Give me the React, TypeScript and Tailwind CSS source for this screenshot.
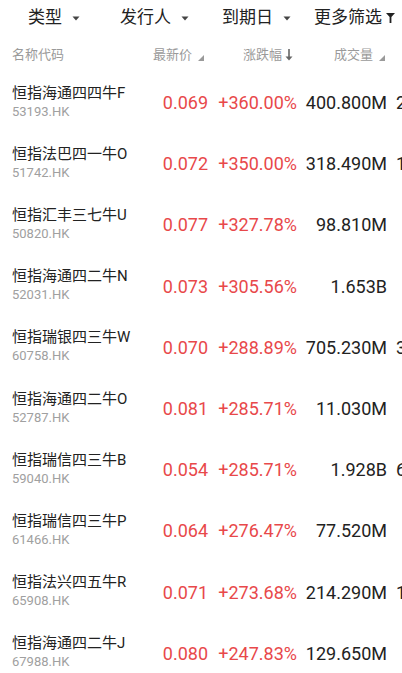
import React from 'react';

type Row = { name: string; code: string; price: string; change: string; volume: string; extra?: string };

const rows: Row[] = [
  { name: '恒指海通四四牛F', code: '53193.HK', price: '0.069', change: '+360.00%', volume: '400.800M', extra: '27.655M' },
  { name: '恒指法巴四一牛O', code: '51742.HK', price: '0.072', change: '+350.00%', volume: '318.490M', extra: '19.802M' },
  { name: '恒指汇丰三七牛U', code: '50820.HK', price: '0.077', change: '+327.78%', volume: '98.810M' },
  { name: '恒指海通四二牛N', code: '52031.HK', price: '0.073', change: '+305.56%', volume: '1.653B' },
  { name: '恒指瑞银四三牛W', code: '60758.HK', price: '0.070', change: '+288.89%', volume: '705.230M', extra: '39.127M' },
  { name: '恒指海通四二牛O', code: '52787.HK', price: '0.081', change: '+285.71%', volume: '11.030M' },
  { name: '恒指瑞信四三牛B', code: '59040.HK', price: '0.054', change: '+285.71%', volume: '1.928B', extra: '65.410M' },
  { name: '恒指瑞信四三牛P', code: '61466.HK', price: '0.064', change: '+276.47%', volume: '77.520M' },
  { name: '恒指法兴四五牛R', code: '65908.HK', price: '0.071', change: '+273.68%', volume: '214.290M', extra: '12.988M' },
  { name: '恒指海通四二牛J', code: '67988.HK', price: '0.080', change: '+247.83%', volume: '129.650M' },
];

const cjk = "font-['Roboto','Noto_Sans_CJK_SC',sans-serif]";
const num = "font-['Roboto',sans-serif]";

function Caret() {
  return (
    <svg width="8" height="5" viewBox="0 0 8 5" className="ml-[10px] shrink-0">
      <path d="M0.5 0.5 L7.5 0.5 L4 4.5 Z" fill="#444" />
    </svg>
  );
}

function Funnel() {
  return (
    <svg width="9" height="10" viewBox="0 0 9 10" className="ml-[4px] shrink-0">
      <path d="M0 0 H9 L5.4 4 V10 H3.6 V4 Z" fill="#222" />
    </svg>
  );
}

function Corner() {
  return (
    <svg width="6" height="6" viewBox="0 0 6 6" className="ml-[6px] mt-[6px] shrink-0">
      <path d="M6 0 V6 H0 Z" fill="#9a9a9a" />
    </svg>
  );
}

function DownArrow() {
  return (
    <svg width="8" height="12" viewBox="0 0 8 12" className="ml-[3px] shrink-0">
      <path d="M3.2 0 H4.8 V7.5 H7.5 L4 11.5 L0.5 7.5 H3.2 Z" fill="#666" />
    </svg>
  );
}

export default function App() {
  return (
    <div className={`w-[402px] h-[673px] overflow-hidden bg-white ${cjk}`}>
      <div className="h-[36px] flex items-center text-[17px] text-[#222]">
        <div className="flex items-center pl-[28px] w-[120px] shrink-0">
          <span>类型</span>
          <Caret />
        </div>
        <div className="flex items-center w-[102px] shrink-0">
          <span>发行人</span>
          <Caret />
        </div>
        <div className="flex items-center w-[92px] shrink-0">
          <span>到期日</span>
          <Caret />
        </div>
        <div className="flex items-center shrink-0">
          <span>更多筛选</span>
          <Funnel />
        </div>
      </div>

      <div className="h-[35px] pt-[3px] flex items-center px-[12px] text-[13px] text-[#9a9a9a]">
        <div className="w-[141px] shrink-0">名称代码</div>
        <div className="w-[60px] flex items-center shrink-0">
          <span>最新价</span>
          <Corner />
        </div>
        <div className="w-[90px] flex items-center pl-[30px] shrink-0">
          <span>涨跌幅</span>
          <DownArrow />
        </div>
        <div className="flex items-center pl-[31px] shrink-0">
          <span>成交量</span>
          <Corner />
        </div>
      </div>

      <div className="flex flex-col">
        {rows.map((r) => (
          <div key={r.code} className="h-[61.2px] flex items-center pl-[12px] whitespace-nowrap">
            <div className="w-[138px] shrink-0 flex flex-col">
              <span className="text-[15px] leading-[19px] text-[#222]">{r.name}</span>
              <span className="text-[13px] leading-[17px] text-[#a0a0a0]">{r.code}</span>
            </div>
            <div className={`w-[58px] shrink-0 text-right text-[18px] text-[#e8484a] mt-[2px] ${num}`}>{r.price}</div>
            <div className={`w-[89px] shrink-0 text-right text-[18px] text-[#e8484a] mt-[2px] ${num}`}>{r.change}</div>
            <div className={`w-[90px] shrink-0 text-right text-[18px] text-[#222] mt-[2px] ${num}`}>{r.volume}</div>
            <div className={`ml-[9px] shrink-0 text-[18px] text-[#222] mt-[2px] ${num}`}>{r.extra ?? ''}</div>
          </div>
        ))}
      </div>
    </div>
  );
}
